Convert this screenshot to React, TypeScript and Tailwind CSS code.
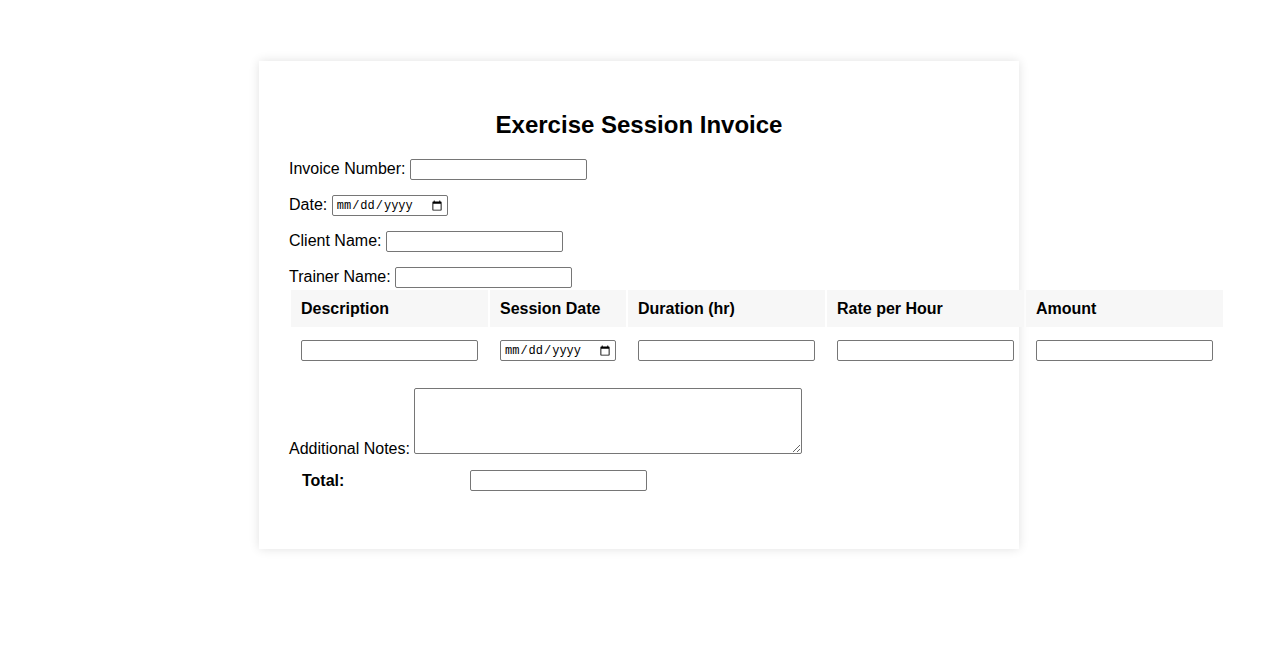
import { useState } from "react";

const inputCls =
  "h-[21px] border border-[#767676] rounded-[2px] bg-white px-[2px] text-[13px] outline-none";

const dateCls =
  "h-[21px] w-[116px] border border-[#767676] rounded-[2px] bg-white pl-[3px] pr-[2px] text-[12px] font-['Liberation_Mono',monospace] outline-none";

export default function App() {
  const [form, setForm] = useState({
    invoiceNumber: "",
    date: "",
    clientName: "",
    trainerName: "",
    description: "",
    sessionDate: "",
    duration: "",
    rate: "",
    notes: "",
  });

  const handleChange = (
    e: React.ChangeEvent<HTMLInputElement | HTMLTextAreaElement>
  ) => {
    setForm({ ...form, [e.target.name]: e.target.value });
  };

  const hours = parseFloat(form.duration);
  const rate = parseFloat(form.rate);
  const amount = !isNaN(hours) && !isNaN(rate) ? (hours * rate).toFixed(2) : "";

  return (
    <div className="min-h-screen bg-white pt-[61px] pb-[40px] font-['Liberation_Sans',Arial,sans-serif] text-[16px] text-black">
      <div className="w-[760px] mx-auto bg-white shadow-[0_0_10px_rgba(0,0,0,0.12)] px-[30px] pt-[50px] pb-[46px]">
        <h1 className="text-center text-[24px] leading-[28px] font-bold">Exercise Session Invoice</h1>

        <div className="mt-[20px] flex flex-col gap-[15px]">
          <div className="flex items-center h-[21px]">
            <label className="mr-[4.5px] -mt-[2px]">Invoice Number:</label>
            <input type="text" name="invoiceNumber" value={form.invoiceNumber} onChange={handleChange} className={`${inputCls} w-[177px]`} />
          </div>

          <div className="flex items-center h-[21px]">
            <label className="mr-[4.5px] -mt-[2px]">Date:</label>
            <input type="date" name="date" value={form.date} onChange={handleChange} className={dateCls} />
          </div>

          <div className="flex items-center h-[21px]">
            <label className="mr-[4.5px] -mt-[2px]">Client Name:</label>
            <input type="text" name="clientName" value={form.clientName} onChange={handleChange} className={`${inputCls} w-[177px]`} />
          </div>

          <div className="flex items-center h-[21px]">
            <label className="mr-[4.5px] -mt-[2px]">Trainer Name:</label>
            <input type="text" name="trainerName" value={form.trainerName} onChange={handleChange} className={`${inputCls} w-[177px]`} />
          </div>
        </div>

        <table className="border-separate border-spacing-[2px]">
          <thead>
            <tr>
              <th className="h-[37px] px-[10px] bg-[#f7f7f7] text-left font-bold leading-[18px]">Description</th>
              <th className="h-[37px] px-[10px] bg-[#f7f7f7] text-left font-bold leading-[18px]">Session Date</th>
              <th className="h-[37px] px-[10px] bg-[#f7f7f7] text-left font-bold leading-[18px]">Duration (hr)</th>
              <th className="h-[37px] px-[10px] bg-[#f7f7f7] text-left font-bold leading-[18px]">Rate per Hour</th>
              <th className="h-[37px] px-[10px] bg-[#f7f7f7] text-left font-bold leading-[18px]">Amount</th>
            </tr>
          </thead>
          <tbody>
            <tr>
              <td className="px-[10px] pt-[11px] pb-[10px]">
                <input type="text" name="description" value={form.description} onChange={handleChange} className={`${inputCls} w-[177px] block`} />
              </td>
              <td className="px-[10px] pt-[11px] pb-[10px]">
                <input type="date" name="sessionDate" value={form.sessionDate} onChange={handleChange} className={`${dateCls} block`} />
              </td>
              <td className="px-[10px] pt-[11px] pb-[10px]">
                <input type="number" name="duration" value={form.duration} onChange={handleChange} className={`${inputCls} w-[177px] block`} />
              </td>
              <td className="px-[10px] pt-[11px] pb-[10px]">
                <input type="number" name="rate" value={form.rate} onChange={handleChange} className={`${inputCls} w-[177px] block`} />
              </td>
              <td className="px-[10px] pt-[11px] pb-[10px]">
                <input type="text" readOnly value={amount} className={`${inputCls} w-[177px] block`} />
              </td>
            </tr>
          </tbody>
        </table>

        <div className="mt-[15px] flex items-end">
          <label className="mr-[4.5px] leading-[16px] mb-[-3px]">Additional Notes:</label>
          <textarea name="notes" value={form.notes} onChange={handleChange}
            className="block w-[388px] h-[66px] border border-[#767676] rounded-[2px] px-[2px] text-[13px] outline-none" />
        </div>

        <table className="mt-[4px] border-separate border-spacing-[2px]">
          <tbody>
            <tr>
              <td className="w-[167px] px-[11px] py-[10px] font-bold leading-[21px]">Total:</td>
              <td className="px-[10px] py-[10px]">
                <input type="text" readOnly value={amount} className={`${inputCls} w-[177px] block`} />
              </td>
            </tr>
          </tbody>
        </table>
      </div>
    </div>
  );
}
